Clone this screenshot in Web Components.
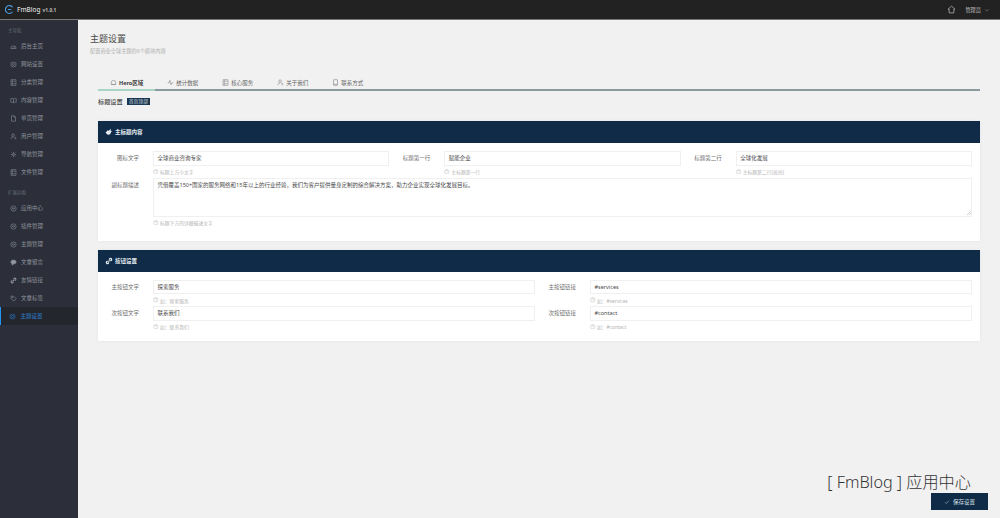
<!DOCTYPE html>
<html lang="zh">
<head>
<meta charset="utf-8">
<title>FmBlog 主题设置</title>
<style>
  html, body { margin: 0; height: 100%; overflow: hidden; }
  body { font-family: "Noto Sans", "Noto Sans CJK SC", sans-serif; background: #f1f1f1; }
</style>
</head>
<body>
<fm-app>
  <fm-header slot="header"></fm-header>
  <fm-sidebar slot="sidebar">
    <fm-nav-group title="主导航">
      <fm-nav-item icon="dash">后台主页</fm-nav-item>
      <fm-nav-item icon="gear">网站设置</fm-nav-item>
      <fm-nav-item icon="list">分类管理</fm-nav-item>
      <fm-nav-item icon="book">内容管理</fm-nav-item>
      <fm-nav-item icon="page">单页管理</fm-nav-item>
      <fm-nav-item icon="user">用户管理</fm-nav-item>
      <fm-nav-item icon="flower">导航管理</fm-nav-item>
      <fm-nav-item icon="list">文件管理</fm-nav-item>
    </fm-nav-group>
    <fm-nav-group title="扩展功能">
      <fm-nav-item icon="box">应用中心</fm-nav-item>
      <fm-nav-item icon="box">插件管理</fm-nav-item>
      <fm-nav-item icon="box">主题管理</fm-nav-item>
      <fm-nav-item icon="chat">文章留言</fm-nav-item>
      <fm-nav-item icon="link">友情链接</fm-nav-item>
      <fm-nav-item icon="tag">文章标签</fm-nav-item>
      <fm-nav-item icon="gear" active>主题设置</fm-nav-item>
    </fm-nav-group>
  </fm-sidebar>

  <fm-page-title heading="主题设置" sub="配置商业全球主题的6个模块内容"></fm-page-title>

  <fm-tabs>
    <fm-tab icon="home" active>Hero区域</fm-tab>
    <fm-tab icon="pulse">统计数据</fm-tab>
    <fm-tab icon="list">核心服务</fm-tab>
    <fm-tab icon="user">关于我们</fm-tab>
    <fm-tab icon="phone">联系方式</fm-tab>
  </fm-tabs>

  <fm-section-title badge="首页顶部">标题设置</fm-section-title>

  <fm-card heading="主标题内容" icon="bird" cols="3">
    <fm-field label="图标文字" hint="标题上方小文字">全球商业咨询专家</fm-field>
    <fm-field label="标题第一行" hint="主标题第一行">赋能企业</fm-field>
    <fm-field label="标题第二行" hint="主标题第二行(高亮)">全球化发展</fm-field>
    <fm-field label="副标题描述" hint="标题下方的详细描述文字" area>凭借覆盖150+国家的服务网络和15年以上的行业经验，我们为客户提供量身定制的综合解决方案，助力企业实现全球化发展目标。</fm-field>
  </fm-card>

  <fm-card heading="按钮设置" icon="link" cols="2">
    <fm-field label="主按钮文字" hint="如：探索服务">探索服务</fm-field>
    <fm-field label="主按钮链接" hint="如：#services">#services</fm-field>
    <fm-field label="次按钮文字" hint="如：联系我们">联系我们</fm-field>
    <fm-field label="次按钮链接" hint="如：#contact">#contact</fm-field>
  </fm-card>

  <fm-save-bar slot="overlay"></fm-save-bar>
</fm-app>

<script>
// stroke icons shared by the nav, the tabs and the card headers
const ICONS = {
  dash: '<path d="M2 12.500a6 6 0 1 1 12 0z"/><path d="M8 12l2.500-4"/>',
  gear: '<circle cx="8" cy="8" r="2.200"/><path d="M8 1.800l1.500 1.600 2.200-.4.600 2.100 2 1-.9 1.900.9 1.900-2 1-.6 2.100-2.200-.4L8 14.200l-1.500-1.600-2.200.4-.6-2.100-2-1L2.600 8l-.9-1.900 2-1 .6-2.100 2.200.4z"/>',
  list: '<path d="M2.500 1.500h11v13h-11zM4.500 4h2.500v2.500H4.500zM4.500 9.500h2.500V12H4.500zM9 5h3M9 10.500h3"/>',
  book: '<path d="M8 4.500C6.500 3 4 3 1.800 3.500v8.500C4 11.500 6.500 11.500 8 13c1.500-1.500 4-1.500 6.200-1V3.500C12 3 9.500 3 8 4.500zM8 4.500V13"/>',
  page: '<path d="M3.500 1.800h6l3 3v9.400h-9zM9.500 1.800v3h3"/>',
  user: '<circle cx="7" cy="5" r="3"/><path d="M2 14c0-3 2-4.500 5-4.500M10 10h4M10 13h4"/>',
  flower: '<circle cx="8" cy="8" r="1.800"/><path d="M8 2v3M8 11v3M2 8h3M11 8h3M3.800 3.800l2 2M10.200 10.200l2 2M12.200 3.800l-2 2M5.800 10.200l-2 2"/>',
  box: '<circle cx="8" cy="8" r="6"/><path d="M5 7h6M5 7l3 3 3-3"/>',
  chat: '<path fill="currentColor" d="M8 2.500c3.500 0 6 2 6 4.500s-2.500 4.500-6 4.500L4.500 14l.4-3C3 10.200 2 8.700 2 7c0-2.500 2.500-4.500 6-4.500z"/>',
  link: '<path stroke-width="2.600" d="M6.800 9.200l2.400-2.400M5 8l-2 2a2.200 2.200 0 0 0 3 3l2-2M11 8l2-2a2.200 2.200 0 0 0-3-3L8 5"/>',
  tag: '<path d="M2.500 2.500h5.500l6 6-5.500 5.500-6-6z"/><circle cx="5.500" cy="5.500" r="1"/>',
  home: '<path d="M3 8a5 5 0 0 1 10 0v4.500H3zM3 12.500h10"/>',
  pulse: '<path d="M1.500 9h3l2-6 2.500 10 2-4h3.500"/>',
  phone: '<rect x="3.500" y="1.500" width="9" height="13" rx="1"/><path d="M3.500 12h9"/>',
  bird: '<path fill="currentColor" stroke="none" d="M1 9.500l5-5.500 1 2 5-4.500-.6 4.500 3.600 1-3 1.200c0 3-2.200 5.300-5 5.300-1.800 0-3-1-4-2.500L1 9.500z"/>',
  check: '<path d="M2.500 8.500l3.500 3.500 7.500-8"/>',
  help: '<circle cx="8" cy="8" r="6.500"/><path d="M6 6.300a2 2 0 1 1 2.800 1.800c-.6.300-.8.700-.8 1.400M8 11.500v.4"/>',
  chevron: '<path d="M3 6l5 5 5-5"/>',
  homeline: '<path d="M8 2l6.200 5.600h-2v6.400H3.800V7.600h-2z"/>'
};

function icon(name, size) {
  return `<svg width="${size}" height="${size}" viewBox="0 0 16 16" fill="none" stroke="currentColor" stroke-width="1.300" aria-hidden="true">${ICONS[name] || ""}</svg>`;
}

class FmElement extends HTMLElement {
  constructor() {
    super();
    this.attachShadow({ mode: "open" });
  }
  connectedCallback() {
    this.shadowRoot.innerHTML = this.render();
  }
}

class FmApp extends FmElement {
  render() {
    return `
      <style>
        :host { display: grid; grid-template: 19px 1fr / 78px 1fr; height: 518px; background: #f1f1f1; position: relative; overflow: hidden; }
        ::slotted([slot="header"]) { grid-column: 1 / -1; }
        main { padding: 13px 20px 0 20px; min-width: 0; }
      </style>
      <slot name="header"></slot>
      <slot name="sidebar"></slot>
      <main><slot></slot></main>
      <slot name="overlay"></slot>
    `;
  }
}

class FmHeader extends FmElement {
  render() {
    return `
      <style>
        :host { display: flex; align-items: center; background: #222222; color: #e2e2e2; padding: 0 10px 0 5px; box-shadow: 0 1px 0 #777; position: relative; }
        .logo { color: #4a9be0; display: flex; margin-right: 3px; }
        b { font-size: 6.500px; font-weight: 500; color: #dcdcdc; }
        small { font-size: 4.800px; font-weight: 700; margin-left: 2px; color: #bdbdbd; padding-top: 1px; }
        .right { margin-left: auto; display: flex; align-items: center; font-size: 5.200px; color: #c4c4c4; }
        .home { display: flex; margin-right: 9px; color: #bbb; }
        .chev { display: flex; margin-left: 3px; color: #999; }
      </style>
      <span class="logo"><svg width="9" height="9" viewBox="0 0 16 16" fill="none" stroke="currentColor" stroke-width="2"><path d="M13.500 4A7 7 0 1 0 13.500 12M5 8h6"/></svg></span>
      <b>FmBlog</b><small>v1.0.1</small>
      <div class="right">
        <span class="home">${icon("homeline", 9)}</span>
        <span>管理员</span>
        <span class="chev">${icon("chevron", 6)}</span>
      </div>
    `;
  }
}

class FmSidebar extends FmElement {
  render() {
    return `
      <style>
        :host { display: flex; flex-direction: column; gap: 6px; background: #2c2f39; padding-top: 6px; }
      </style>
      <slot></slot>
    `;
  }
}

class FmNavGroup extends FmElement {
  render() {
    return `
      <style>
        :host { display: block; }
        h4 { margin: 0; height: 12px; line-height: 10px; padding-left: 8px; font-size: 4.500px; font-weight: 400; color: #666b77; }
      </style>
      <h4>${this.getAttribute("title")}</h4>
      <slot></slot>
    `;
  }
}

class FmNavItem extends FmElement {
  render() {
    return `
      <style>
        :host { display: flex; align-items: center; height: 18px; padding-left: 9.500px; font-size: 5.500px; color: #90949f; box-sizing: border-box; }
        :host([active]) { background: #24262e; color: #2f80cf; border-left: 1.500px solid #2196f3; padding-left: 8px; }
        .i { display: flex; margin-right: 4.500px; width: 7px; }
      </style>
      <span class="i">${icon(this.getAttribute("icon"), 7)}</span>
      <slot></slot>
    `;
  }
}

class FmPageTitle extends FmElement {
  render() {
    return `
      <style>
        :host { display: block; height: 44px; margin-left: -8px; }
        h1 { margin: 0; font-size: 9px; line-height: 14px; font-weight: 400; color: #4a4a4a; }
        p { margin: 0; padding-top: 1px; font-size: 5.200px; line-height: 8px; color: #aeaeae; }
      </style>
      <h1>${this.getAttribute("heading")}</h1>
      <p>${this.getAttribute("sub")}</p>
    `;
  }
}

class FmTabs extends FmElement {
  render() {
    return `
      <style>
        :host { display: flex; height: 13px; border-bottom: 2px solid #8c9aa0; }
      </style>
      <slot></slot>
    `;
  }
}

class FmTab extends FmElement {
  render() {
    return `
      <style>
        :host { display: flex; align-items: center; gap: 2px; padding: 0 12px; height: 15px; box-sizing: border-box; font-size: 5.500px; color: #666; padding-bottom: 2px; }
        :host([active]) { color: #3a3a3a; font-weight: 700; border-bottom: 2px solid #a9d5c5; padding-bottom: 0; }
        .i { display: flex; color: #808080; }
      </style>
      <span class="i">${icon(this.getAttribute("icon"), 7)}</span>
      <slot></slot>
    `;
  }
}

class FmSectionTitle extends FmElement {
  render() {
    return `
      <style>
        :host { display: flex; align-items: center; gap: 4px; height: 20px; margin-bottom: 10px; font-size: 6.200px; color: #4a4a4a; font-weight: 500; }
        span { background: #1a3550; color: #cfd8df; font-size: 4.800px; line-height: 7px; padding: 0 2px; font-weight: 400; }
      </style>
      <slot></slot><span>${this.getAttribute("badge")}</span>
    `;
  }
}

class FmCard extends FmElement {
  render() {
    return `
      <style>
        :host { display: block; background: #fff; margin-bottom: 9px; box-shadow: 0 0 3px rgba(60, 90, 130, .08); }
        header { display: flex; align-items: center; gap: 2px; height: 22px; padding-left: 7px; background: #0f2b47; color: #e6ecf1; font-size: 5.500px; font-weight: 700; }
        header span { display: flex; }
        .grid { display: grid; grid-template-columns: repeat(${this.getAttribute("cols")}, 1fr); padding: 8px 8px 8px 0; }
      </style>
      <header><span>${icon(this.getAttribute("icon"), 8)}</span>${this.getAttribute("heading")}</header>
      <div class="grid"><slot></slot></div>
    `;
  }
}

class FmField extends FmElement {
  render() {
    const area = this.hasAttribute("area");
    return `
      <style>
        :host { display: grid; grid-template-columns: 55px minmax(0, 1fr); font-size: 5.500px; color: #6e6e6e; }
        :host([area]) { grid-column: 1 / -1; padding-bottom: 4px; }
        label { text-align: right; padding-right: 14px; line-height: 14.500px; }
        .box { height: 14.500px; line-height: 13px; box-sizing: border-box; border: 1px solid #f0f0f0; padding: 0 3.500px; color: #4a4a4a; position: relative; background: #fff; }
        :host([area]) .box { height: 39px; line-height: 10px; padding-top: 1px; }
        .grip { position: absolute; right: .5px; bottom: .5px; display: flex; color: #a5a5a5; }
        .hint { grid-column: 2; display: flex; align-items: center; gap: 1.500px; height: 12px; font-size: 4.800px; color: #b3b3b3; }
        .hint span { display: flex; }
      </style>
      <label>${this.getAttribute("label")}</label>
      <div class="box"><slot></slot>${area ? '<span class="grip"><svg width="4" height="4" viewBox="0 0 4 4" stroke="currentColor" stroke-width=".5"><path d="M0 4L4 0M2 4L4 2"/></svg></span>' : ""}</div>
      <div class="hint"><span>${icon("help", 5.500)}</span>${this.getAttribute("hint")}</div>
    `;
  }
}

class FmSaveBar extends FmElement {
  render() {
    return `
      <style>
        /* floats over the page, pinned to the lower right corner */
        :host { position: absolute; right: 12px; bottom: 8px; display: flex; flex-direction: column; align-items: flex-end; }
        .mark { font-size: 16.200px; font-weight: 300; line-height: 22px; color: #333; margin-right: 17px; }
        button { display: flex; align-items: center; justify-content: center; gap: 3px; width: 57px; height: 17px; border: 0; padding: 0; background: #0f2b47; color: #d8e0e6; font: inherit; font-size: 5.500px; }
        button span { display: flex; }
      </style>
      <div class="mark">[ FmBlog ] 应用中心</div>
      <button type="button"><span>${icon("check", 6)}</span>保存设置</button>
    `;
  }
}

customElements.define("fm-app", FmApp);
customElements.define("fm-header", FmHeader);
customElements.define("fm-sidebar", FmSidebar);
customElements.define("fm-nav-group", FmNavGroup);
customElements.define("fm-nav-item", FmNavItem);
customElements.define("fm-page-title", FmPageTitle);
customElements.define("fm-tabs", FmTabs);
customElements.define("fm-tab", FmTab);
customElements.define("fm-section-title", FmSectionTitle);
customElements.define("fm-card", FmCard);
customElements.define("fm-field", FmField);
customElements.define("fm-save-bar", FmSaveBar);
</script>
</body>
</html>
